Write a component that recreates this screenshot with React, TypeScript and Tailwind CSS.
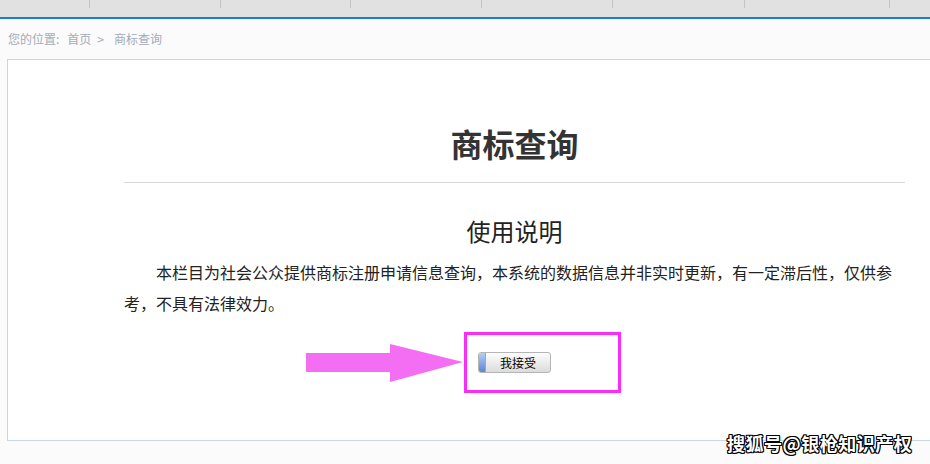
import React from 'react';

const TABS = [90, 131, 130, 131, 131, 132, 145];

const sans = "font-['Noto_Sans_CJK_SC','Noto_Sans',sans-serif]";

export default function App() {
  return (
    <div className={`w-[930px] h-[464px] overflow-hidden bg-[#fbfbfb] ${sans} relative`}>
      {/* top nav bar */}
      <div className="flex h-[19px] bg-[#e1e1e1] border-b-2 border-[#1b7bd5]">
        {TABS.map((w, i) => (
          <div key={i} className="h-[8px] border-r border-[#c4c4c4] shrink-0" style={{ width: w }} />
        ))}
      </div>

      {/* breadcrumb */}
      <div className="h-[40px] flex items-center pl-[8px] text-[12px] text-[#a3abb8]">
        <span>您的位置:</span>
        <span className="ml-[8px]">首页</span>
        <span className="ml-[6px]">&gt;</span>
        <span className="ml-[10px]">商标查询</span>
      </div>

      {/* content box */}
      <div className="ml-[7px] mr-[-10px] h-[382px] border border-[#c9d6e6] bg-white">
        <div className="ml-[116px] w-[781px] flex flex-col">
          <h1 className="mt-[62px] text-center text-[32px] leading-[42px] font-bold text-[#333]">
            商标查询
          </h1>
          <div className="mt-[18px] h-px bg-[#d8d8d8]" />
          <h2 className="mt-[32px] text-center text-[24px] leading-[32px] text-[#222]">使用说明</h2>
          <p className="mt-[10px] text-[16px] leading-[31px] text-[#222] indent-[32px]">
            本栏目为社会公众提供商标注册申请信息查询，本系统的数据信息并非实时更新，有一定滞后性，仅供参考，不具有法律效力。
          </p>
          <div className="mt-[13px] flex items-center">
            {/* arrow */}
            <svg width="158" height="40" viewBox="0 0 158 40" className="ml-[182px]">
              <polygon points="0,10 84,10 84,1 157,19 84,39 84,29 0,29" fill="#f46ef4" />
            </svg>
            <div className="w-[157px] h-[61px] border-[3px] border-[#fa2cfa] flex items-center pl-[11px]">
              <button className="flex items-center h-[21px] w-[73px] rounded-[3px] border border-[#b5b5b5] bg-gradient-to-b from-[#fdfdfd] to-[#dcdcdc] overflow-hidden">
                <span className="w-[7px] h-full bg-gradient-to-b from-[#b7cdf3] to-[#5b86d6] border-r border-[#9aa8c0]" />
                <span className="flex-1 text-[12px] leading-none text-black">我接受</span>
              </button>
            </div>
          </div>
        </div>
      </div>

      {/* watermark */}
      <div className="absolute left-[727px] top-[430px] text-[18px] font-bold text-white tracking-[0.5px] [text-shadow:1px_1px_0_#000,-1px_-1px_0_#000,1px_-1px_0_#000,-1px_1px_0_#000,0_1px_0_#000,1px_0_0_#000,0_-1px_0_#000,-1px_0_0_#000]">
        搜狐号@银枪知识产权
      </div>
    </div>
  );
}
